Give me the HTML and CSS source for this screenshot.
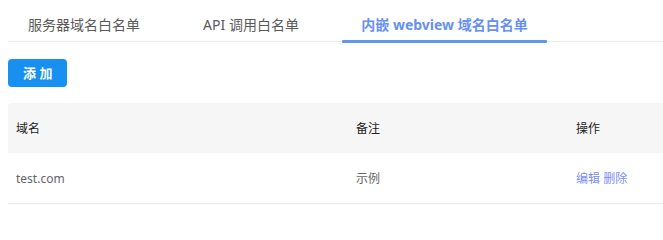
FILE: index.html
```html
<!DOCTYPE html>
<html lang="zh-CN">
<head>
<meta charset="utf-8">
<title>业务域名</title>
<link rel="stylesheet" href="styles.css">
</head>
<body>
<div class="page">
  <nav class="tabs">
    <div class="tab tab-server">服务器域名白名单</div>
    <div class="tab tab-api">API 调用白名单</div>
    <div class="tab tab-webview active">内嵌 webview 域名白名单</div>
  </nav>
  <div class="toolbar">
    <button class="btn-primary">添 加</button>
  </div>
  <div class="table-wrap">
    <table class="table">
      <colgroup>
        <col class="col-domain">
        <col class="col-note">
        <col class="col-op">
      </colgroup>
      <thead>
        <tr><th>域名</th><th>备注</th><th>操作</th></tr>
      </thead>
      <tbody>
        <tr>
          <td>test.com</td>
          <td>示例</td>
          <td><a class="link">编辑</a> <a class="link">删除</a></td>
        </tr>
      </tbody>
    </table>
  </div>
</div>
</body>
</html>
```
FILE: styles.css
```css
html, body {
  margin: 0;
  padding: 0;
  background: #fff;
}
body {
  font-family: "Noto Sans", "Noto Sans CJK SC", sans-serif;
  overflow: hidden;
}
.page {
  padding-left: 8px;
  overflow: hidden;
}
.tabs {
  display: flex;
  gap: 24px;
  border-bottom: 1px solid #ebebeb;
  height: 42px;
  box-sizing: border-box;
}
.tab {
  position: relative;
  padding: 15px 0 6px;
  font-size: 14px;
  line-height: 20px;
  color: #5a5a5a;
  text-align: center;
  white-space: nowrap;
}
.tab-server { width: 152px; }
.tab-api { width: 134px; }
.tab-webview { width: 205px; }
.tab.active {
  color: #6790f2;
  font-weight: 700;
}
.tab.active::after {
  content: "";
  position: absolute;
  left: 0;
  right: 0;
  bottom: -2px;
  height: 3px;
  background: #5e97f4;
  border-radius: 1px;
}
.toolbar {
  padding-top: 17px;
}
.btn-primary {
  display: block;
  height: 28px;
  padding: 0 15px;
  border: none;
  border-radius: 4px;
  background: #1890ef;
  color: #fff;
  font-family: inherit;
  font-size: 13px;
  font-weight: 600;
  line-height: 28px;
  cursor: pointer;
}
.table-wrap {
  margin-top: 16px;
  width: 700px;
}
.table {
  width: 100%;
  border-collapse: separate;
  border-spacing: 0;
  font-size: 12px;
  table-layout: fixed;
}
.col-domain { width: 340px; }
.col-note { width: 220px; }
.table th {
  height: 50px;
  padding: 0 8px;
  background: #f6f6f6;
  color: #222;
  font-weight: 400;
  text-align: left;
}
.table th:first-child {
  border-top-left-radius: 4px;
}
.table td {
  height: 50px;
  padding: 0 8px;
  color: #666;
  border-bottom: 1px solid #e8e8e8;
}
.link {
  color: #7b8ef2;
  cursor: pointer;
}
```
